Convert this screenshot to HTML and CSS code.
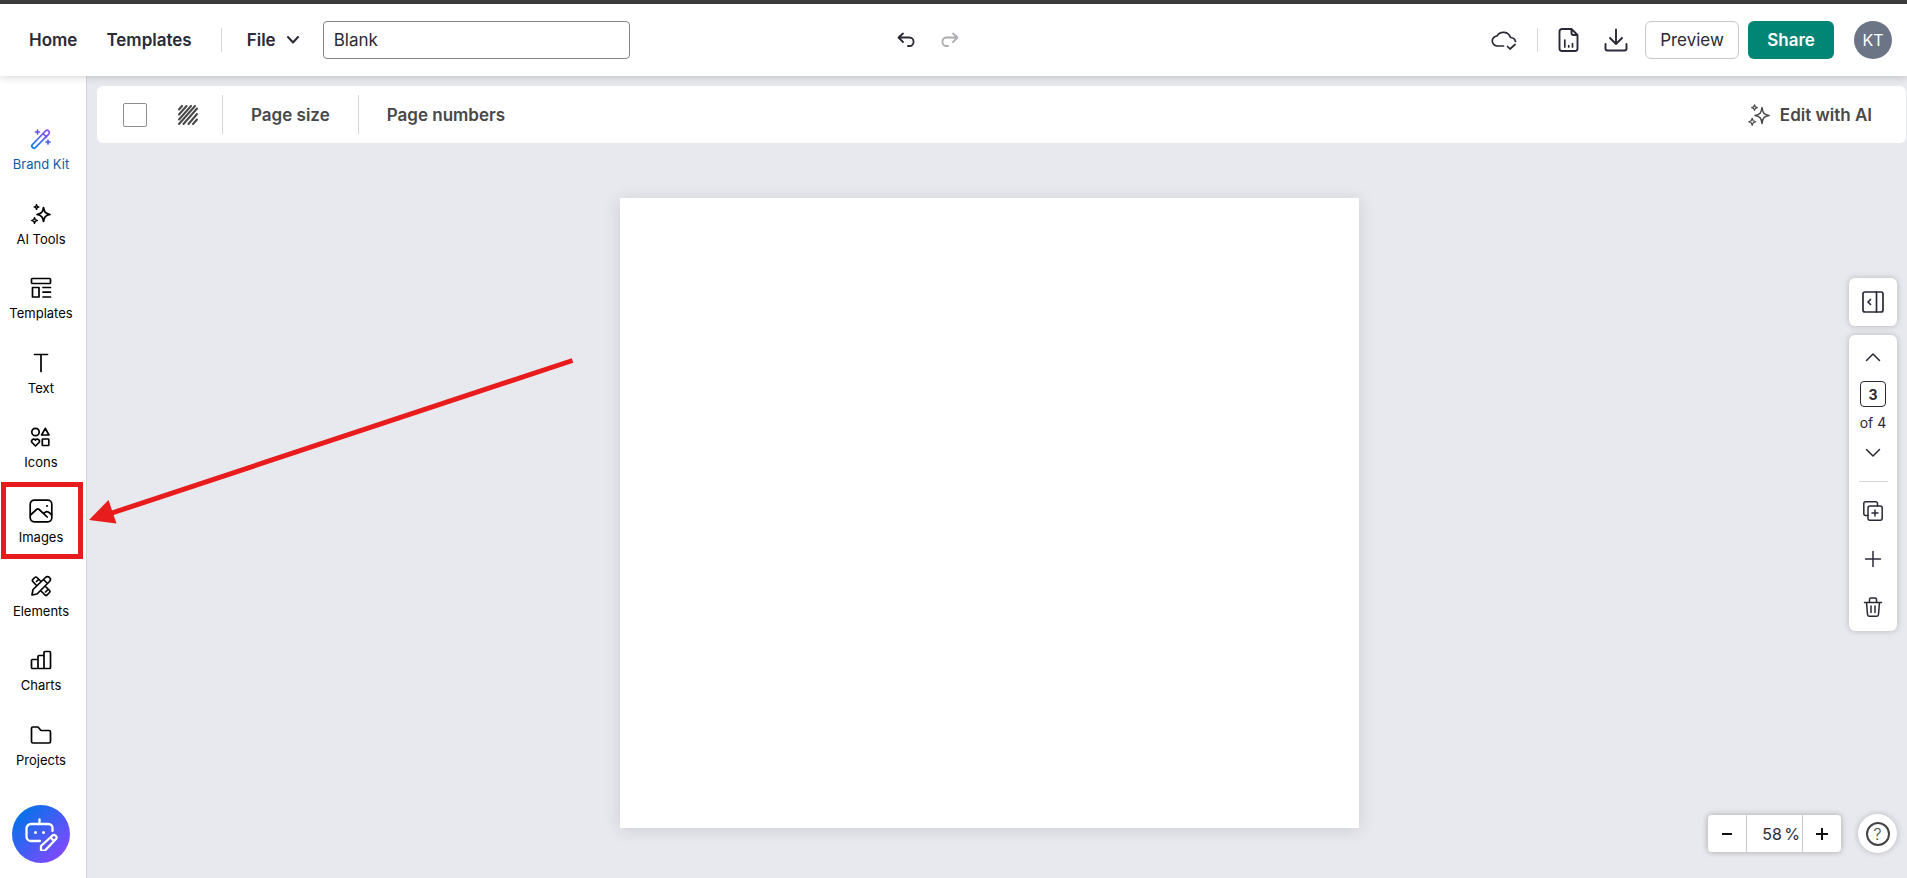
FILE: index.html
```html
<!DOCTYPE html>
<html lang="en">
<head>
    <meta charset="utf-8">
    <meta name="viewport" content="width=device-width, initial-scale=1">
    <title>Blank</title>
    <link rel="stylesheet" href="styles.css">
</head>
<body>

<header class="topbar">
    <nav class="topbar-left">
        <a href="#" class="nav-link">Home</a>
        <a href="#" class="nav-link">Templates</a>
        <span class="divider"></span>
        <button type="button" class="file-menu">File
            <svg width="14" height="14" viewBox="0 0 14 14"><path d="M2 4l5 5.500 5-5.500"/></svg>
        </button>
        <input type="text" class="doc-title" value="Blank" aria-label="Design title">
    </nav>
    <div class="history">
        <button type="button" class="icon-btn" aria-label="Undo">
            <svg width="20" height="20" viewBox="0 0 20 20"><path d="M7 3.500L2.500 7.500 7 12M3 7.500h10.500a4 4.200 0 0 1 0 8.500H12" stroke-width="1.800"/></svg>
        </button>
        <button type="button" class="icon-btn" aria-label="Redo" disabled>
            <svg width="20" height="20" viewBox="0 0 20 20"><path d="M13 3.500l4.500 4L13 12M17 7.500H6.500a4 4.200 0 0 0 0 8.500H8" stroke-width="1.800"/></svg>
        </button>
    </div>
    <div class="topbar-right">
        <button type="button" class="icon-btn" aria-label="Saved">
            <svg width="26" height="24" viewBox="0 0 26 24"><path d="M12.500 18H6.500a5 5 0 0 1-.500-10 7.500 7.500 0 0 1 13.500 1.500c2.500.2 4.500 1.500 5 4M16.500 18.500l2.500 2.500 5-4.500"/></svg>
        </button>
        <span class="divider"></span>
        <button type="button" class="icon-btn" aria-label="Report">
            <svg width="24" height="24" viewBox="0 0 24 24"><path d="M14.500 1H5A2.500 2.500 0 0 0 2.500 3.500v17A2.500 2.500 0 0 0 5 23h13a2.500 2.500 0 0 0 2.500-2.500V7zM14.500 1v4a2 2 0 0 0 2 2h4" stroke-width="1.900"/><path d="M7.800 12v7M11.700 17.500V19M15.500 15.500V19" stroke-width="1.700"/></svg>
        </button>
        <button type="button" class="icon-btn" aria-label="Download">
            <svg width="24" height="24" viewBox="0 0 24 24"><path d="M12 1.500v14M6 10l6 6 6-6M1.500 16v4.500a2 2 0 0 0 2 2h17a2 2 0 0 0 2-2V16" stroke-width="1.900"/></svg>
        </button>
        <button type="button" class="btn preview">Preview</button>
        <button type="button" class="btn share">Share</button>
        <button type="button" class="avatar">KT</button>
    </div>
</header>

<div class="app">
    <aside class="sidebar">
        <nav class="tools">
            <a href="#" class="tool brand">
                <svg width="22" height="22" viewBox="0 0 22 22">
                    <defs>
                        <linearGradient id="brandGradient" x1="0" y1="1" x2=".4" y2="0">
                            <stop offset="0" stop-color="#0074e8"/>
                            <stop offset="1" stop-color="#7d4fff"/>
                        </linearGradient>
                    </defs>
                    <path d="M2.500 16.500L15.500 3a1.900 1.900 0 0 1 3.200 3.200L5.500 19.500a2.100 2.100 0 0 1-3-3zM13 5.500l3.500 3.500M7.500 2v4M5.500 4h4M18 12v4M16 14h4" stroke="url(#brandGradient)"/>
                </svg>
                Brand Kit
            </a>
            <a href="#" class="tool">
                <svg width="22" height="22" viewBox="0 0 22 22"><path d="M13.500 4.500c.7 4.500 2 6 6.500 7-4.500 1-5.800 2.500-6.500 7-.7-4.500-2-6-6.500-7 4.500-1 5.800-2.500 6.500-7z"/><path d="M6.500 1.500l.7 1.800 1.800.7-1.800.7-.7 1.800-.7-1.800L4 4l1.800-.7zM4.500 14.500l.8 2.200 2.200.8-2.200.8-.8 2.200-.8-2.200-2.200-.8 2.200-.8z" stroke-width="1.300"/></svg>
                AI Tools
            </a>
            <a href="#" class="tool">
                <svg width="22" height="22" viewBox="0 0 22 22"><rect x="1.500" y="1.500" width="19" height="5" rx="1"/><path d="M2.500 10.500h6.500v9.500H2.500zM13 10.500h7.500M13 15.200h7.500M13 20h7.500"/></svg>
                Templates
            </a>
            <a href="#" class="tool">
                <svg width="22" height="22" viewBox="0 0 22 22"><path d="M4.500 2.500h13M11 2.500V19.500"/></svg>
                Text
            </a>
            <a href="#" class="tool">
                <svg width="22" height="22" viewBox="0 0 22 22"><circle cx="5.500" cy="6" r="3.700"/><path d="M15.300 2.300l3.700 6.700h-7.400z"/><rect x="12.300" y="13" width="6.500" height="6.500" rx=".6"/><path d="M5.500 20L2 16.500C.5 14.500 3.500 11.500 5.500 14c2-2.500 5 .5 3.500 2.500z"/></svg>
                Icons
            </a>
            <a href="#" class="tool active">
                <svg width="24" height="24" viewBox="0 0 24 24"><rect x="1.200" y="1.200" width="21.600" height="21.600" rx="4"/><path d="M1.500 16l6-5.500a2 2 0 0 1 2.700 0l8 7.500M14.500 14.500l1.500-1.200a3 3 0 0 1 3.800 0l2.700 2.200"/><circle cx="18" cy="7" r="1" class="dot"/></svg>
                Images
            </a>
            <a href="#" class="tool">
                <svg width="22" height="22" viewBox="0 0 22 22"><path d="M2 20l1-5.500L15.500 2.500a2.500 2.500 0 0 1 4 4L7 19zM13.500 4.500l4 4M6.500 10.500L2.800 6.500a1.500 1.500 0 0 1 0-2l2-2a1.500 1.500 0 0 1 2.200 0l4 4M6.500 6.500l2-2M15.500 11.500l4 4a1.500 1.500 0 0 1 0 2l-2.500 2.500a1.500 1.500 0 0 1-2 0l-3.500-3.500M15.500 17l2-2"/></svg>
                Elements
            </a>
            <a href="#" class="tool">
                <svg width="22" height="22" viewBox="0 0 22 22"><path d="M1.500 11.500a1 1 0 0 1 1-1H8v9H2.500a1 1 0 0 1-1-1zM8 19.500v-12a1 1 0 0 1 1-1h5v13zM14 19.500V3.500a1 1 0 0 1 1-1h4.500a1 1 0 0 1 1 1v15a1 1 0 0 1-1 1z"/></svg>
                Charts
            </a>
            <a href="#" class="tool">
                <svg width="22" height="22" viewBox="0 0 22 22"><path d="M1.500 4.500a1.500 1.500 0 0 1 1.500-1.500h5l3 3.500h8a1.500 1.500 0 0 1 1.500 1.500v9.500a1.500 1.500 0 0 1-1.500 1.500H3a1.500 1.500 0 0 1-1.500-1.500z"/></svg>
                Projects
            </a>
        </nav>
        <button type="button" class="assistant" aria-label="Assistant">
            <svg width="34" height="34" viewBox="0 0 34 34"><path d="M16 24H7a4.500 4.500 0 0 1-4.500-4.500v-8A4.500 4.500 0 0 1 7 7h17.500a4 4 0 0 1 4 4v3M15.500 7V2.500"/><path d="M17 34v-5L28.500 18.500a2.500 2.500 0 0 1 3.500 3.500L21 33.500zM26.500 20.500l3.500 3.500"/><circle cx="11.500" cy="15.500" r="1.500" class="dot"/><circle cx="19.500" cy="15.500" r="1.500" class="dot"/></svg>
        </button>
    </aside>

    <main class="workspace">
        <div class="toolbar">
            <button type="button" class="swatch" aria-label="Background color"></button>
            <button type="button" class="icon-btn pattern" aria-label="Background pattern">
                <svg width="20" height="20" viewBox="0 0 20 20"><path d="M1 4.500L4 1M1 9.500L8.500 1M1 14.500L13 1M1 19L17 1M5.500 19L19 3.500M10.500 19L19 9M15 19l4-4.500"/></svg>
            </button>
            <span class="divider"></span>
            <button type="button" class="text-btn">Page size</button>
            <span class="divider"></span>
            <button type="button" class="text-btn">Page numbers</button>
            <button type="button" class="text-btn edit-ai">
                <svg width="22" height="22" viewBox="0 0 22 22"><path d="M14 3.500c.7 5.500 2 7 7 8-5 1-6.300 2.500-7 8-.7-5.500-2-7-7-8 5-1 6.300-2.500 7-8z"/><path d="M6.500.8l.8 2 2 .8-2 .8-.8 2-.8-2-2-.8 2-.8zM4.200 14.300l1 2.500 2.500 1-2.500 1-1 2.500-1-2.500-2.500-1 2.500-1z" stroke-width="1.200"/></svg>
                Edit with AI
            </button>
        </div>

        <div class="stage">
            <div class="page"></div>
        </div>

        <div class="side-panel">
            <button type="button" class="card panel-toggle" aria-label="Open panel">
                <svg width="22" height="22" viewBox="0 0 22 22"><rect x="1" y="1" width="20" height="20" rx="2"/><path d="M14.500 1v20M8.500 8.500L6 11l2.500 2.500"/></svg>
            </button>
            <div class="card pager">
                <button type="button" class="icon-btn" aria-label="Previous page">
                    <svg width="16" height="16" viewBox="0 0 16 16"><path d="M1.500 11.500L8 5l6.500 6.500"/></svg>
                </button>
                <input type="text" class="page-number" value="3" aria-label="Page">
                <span class="page-total">of 4</span>
                <button type="button" class="icon-btn" aria-label="Next page">
                    <svg width="16" height="16" viewBox="0 0 16 16"><path d="M1.500 4.500L8 11l6.500-6.500"/></svg>
                </button>
                <hr class="rule">
                <button type="button" class="icon-btn page-action" aria-label="Duplicate page">
                    <svg width="20" height="20" viewBox="0 0 20 20"><path d="M5 14.500H2.500A1.700 1.700 0 0 1 .8 12.800V2.500A1.700 1.700 0 0 1 2.500.8h10.300a1.700 1.700 0 0 1 1.700 1.700V5"/><rect x="5" y="5" width="14.200" height="14.200" rx="2"/><path d="M12 9v6M9 12h6"/></svg>
                </button>
                <button type="button" class="icon-btn page-action" aria-label="Add page">
                    <svg width="20" height="20" viewBox="0 0 20 20"><path d="M10 2.500v15M2.500 10h15"/></svg>
                </button>
                <button type="button" class="icon-btn page-action" aria-label="Delete page">
                    <svg width="20" height="20" viewBox="0 0 20 20"><path d="M1.500 5.500h17M3.500 5.500l1 12a1.800 1.800 0 0 0 1.700 1.700h7.600a1.800 1.800 0 0 0 1.700-1.700l1-12M6.500 5.500V2.500A1.500 1.500 0 0 1 8 1h4a1.500 1.500 0 0 1 1.500 1.500v3M8 9v6.500M12 9v6.500"/></svg>
                </button>
            </div>
        </div>

        <div class="bottom-controls">
            <div class="zoom">
                <button type="button" class="zoom-btn" aria-label="Zoom out">
                    <svg width="14" height="14" viewBox="0 0 14 14"><path d="M2 7h10"/></svg>
                </button>
                <label class="zoom-value"><input type="text" value="58" aria-label="Zoom level">%</label>
                <button type="button" class="zoom-btn" aria-label="Zoom in">
                    <svg width="14" height="14" viewBox="0 0 14 14"><path d="M1 7h12M7 1v12"/></svg>
                </button>
            </div>
            <button type="button" class="help" aria-label="Help"><span class="help-mark">?</span></button>
        </div>
    </main>
</div>

<!-- pointer to the Images tool -->
<svg class="pointer" width="490" height="170" viewBox="0 0 490 170">
    <path d="M484.500 4.500L24 157" class="pointer-line"/>
    <path d="M1 164l19.500-20 8 23.500z" class="pointer-head"/>
</svg>

</body>
</html>
```
FILE: styles.css
```css
* {
    box-sizing: border-box;
}

body {
    margin: 0;
    height: 100vh;
    display: flex;
    flex-direction: column;
    overflow: hidden;
    font-family: Inter, "Liberation Sans", sans-serif;
    font-size: 17px;
    color: #2b2935;
    background: #e8e9ee;
}

button, input {
    font: inherit;
    color: inherit;
}

button {
    border: 0;
    padding: 0;
    background: none;
    cursor: pointer;
}

a {
    color: inherit;
    text-decoration: none;
}

svg {
    display: block;
    flex: none;
    fill: none;
    stroke: currentColor;
    stroke-width: 1.7;
    stroke-linecap: round;
    stroke-linejoin: round;
}

.dot {
    fill: currentColor;
    stroke: none;
}

.icon-btn {
    display: flex;
    align-items: center;
    justify-content: center;
}

.icon-btn:disabled {
    color: #acabb0;
}

.divider {
    width: 1px;
    height: 24px;
    background: #d9d9dc;
}

/* top bar */
.topbar {
    position: relative;
    z-index: 2;
    flex: none;
    display: grid;
    grid-template-columns: 1fr auto 1fr;
    align-items: center;
    height: 76px;
    padding: 0 15px 0 29px;
    border-top: 4px solid #3b3b3b;
    background: #fff;
    box-shadow: 0 1px 8px rgba(0, 0, 0, .18);
}

.topbar-left, .topbar-right, .history {
    display: flex;
    align-items: center;
}

.nav-link {
    margin-right: 29px;
    font-weight: 600;
}

.file-menu {
    display: flex;
    align-items: center;
    gap: 10px;
    margin: 0 23px 0 25px;
    font-weight: 600;
}

.file-menu svg {
    stroke-width: 2;
}

.doc-title {
    width: 307px;
    height: 38px;
    padding: 0 10px;
    border: 1px solid #85858a;
    border-radius: 4px;
    background: #fff;
}

.history {
    gap: 24px;
    margin-right: 66px;
}

.topbar-right {
    justify-content: flex-end;
}

.topbar-right .divider {
    margin: 0 19px 0 20px;
}

.topbar-right .icon-btn + .icon-btn {
    margin-left: 23px;
}

.btn {
    height: 38px;
    border-radius: 6px;
}

.preview {
    width: 94px;
    margin-left: 17px;
    border: 1px solid #c9c9cc;
}

.share {
    width: 86px;
    margin-left: 9px;
    color: #fff;
    font-weight: 600;
    background: #018575;
}

.avatar {
    width: 38px;
    height: 38px;
    margin-left: 20px;
    border-radius: 50%;
    font-size: 16px;
    color: #fff;
    background: #6b7585;
}

.app {
    flex: 1;
    display: flex;
    min-height: 0;
}

/* left tools */
.sidebar {
    flex: none;
    display: flex;
    flex-direction: column;
    width: 87px;
    padding: 35px 4px 15px 0;
    border-right: 1px solid #d5d6da;
    background: #fff;
}

.tools {
    flex: 1;
    display: flex;
    flex-direction: column;
}

.tool {
    position: relative;
    flex: 1;
    display: flex;
    flex-direction: column;
    align-items: center;
    justify-content: center;
    gap: 6px;
    padding-top: 4px;
    font-size: 13px;
    line-height: 16px;
    color: #000;
}

.brand {
    color: #0b5cad;
}

.active::after {
    content: "";
    position: absolute;
    inset: -1px -1px -1px 1px;
    border: 5px solid #e81c1c;
}

.assistant {
    display: flex;
    align-items: center;
    justify-content: center;
    width: 58px;
    height: 58px;
    margin: 24px 0 0 12px;
    border-radius: 50%;
    color: #fff;
    background: linear-gradient(135deg, #0074e8 10%, #8547ff 90%);
}

.assistant svg {
    stroke-width: 2.3;
}

/* canvas area */
.workspace {
    position: relative;
    flex: 1;
    display: flex;
    flex-direction: column;
    min-width: 0;
}

.toolbar {
    flex: none;
    display: flex;
    align-items: center;
    height: 57px;
    margin: 10px 1px 0 10px;
    padding: 0 34px 0 26px;
    border-radius: 6px;
    color: #484848;
    background: #fff;
}

.toolbar .divider {
    height: 39px;
}

.swatch {
    width: 24px;
    height: 24px;
    border: 1px solid #8e8e8e;
    border-radius: 2px;
    background: #fff;
}

.pattern {
    margin: 0 24px 0 31px;
}

.pattern svg {
    stroke-width: 2;
}

.text-btn {
    margin: 0 28px;
    font-weight: 600;
}

.edit-ai {
    display: flex;
    align-items: center;
    gap: 10px;
    margin: 0 0 0 auto;
}

.edit-ai svg {
    stroke-width: 1.5;
}

.stage {
    flex: 1;
    display: flex;
    justify-content: center;
    align-items: flex-start;
    padding: 55px 15px 0 0;
}

.page {
    width: 739px;
    aspect-ratio: 739 / 630;
    background: #fff;
    box-shadow: 0 2px 16px rgba(40, 45, 65, .14);
}

.side-panel {
    position: absolute;
    top: 202px;
    right: 10px;
    display: flex;
    flex-direction: column;
    gap: 9px;
    width: 48px;
}

.card {
    border-radius: 6px;
    background: #fff;
    box-shadow: 0 0 6px rgba(0, 0, 0, .22);
}

.panel-toggle {
    display: flex;
    align-items: center;
    justify-content: center;
    height: 48px;
}

.pager {
    display: flex;
    flex-direction: column;
    align-items: center;
    padding-top: 14px;
}

.pager svg {
    stroke-width: 1.5;
}

.page-number {
    width: 26px;
    height: 26px;
    margin: 16px 0 6px;
    padding: 0;
    border: 1px solid #2b2935;
    border-radius: 4px;
    font-size: 14px;
    font-weight: 700;
    text-align: center;
}

.page-total {
    margin-bottom: 12px;
    font-size: 14px;
    line-height: 20px;
}

.rule {
    width: 29px;
    height: 1px;
    margin: 20px 0 5px;
    border: 0;
    background: #d5d5d8;
}

.page-action {
    width: 48px;
    height: 48px;
}

.bottom-controls {
    position: absolute;
    right: 10px;
    bottom: 25px;
    display: flex;
    align-items: center;
    gap: 17px;
}

.zoom {
    display: flex;
    height: 37px;
    border-radius: 4px;
    background: #fff;
    box-shadow: 0 0 6px rgba(0, 0, 0, .3);
}

.zoom-btn {
    display: flex;
    align-items: center;
    justify-content: center;
    width: 38px;
    color: #111;
}

.zoom-btn svg {
    stroke-width: 2;
    stroke-linecap: butt;
}

.zoom-value {
    display: flex;
    align-items: center;
    justify-content: flex-end;
    width: 57px;
    padding-right: 2px;
    border: solid #c8c8ca;
    border-width: 0 1px;
    font-size: 16px;
}

.zoom-value input {
    width: 22px;
    padding: 0;
    border: 0;
    background: none;
}

.help {
    display: flex;
    align-items: center;
    justify-content: center;
    width: 39px;
    height: 39px;
    border-radius: 50%;
    color: #444;
    background: #fff;
    box-shadow: 0 0 6px rgba(0, 0, 0, .22);
}

.help-mark {
    width: 24px;
    height: 24px;
    border: 2px solid #444;
    border-radius: 50%;
    font-size: 16px;
    font-weight: 300;
    line-height: 20px;
}

.pointer {
    position: absolute;
    top: 356px;
    left: 88px;
    z-index: 3;
    pointer-events: none;
}

.pointer-line {
    stroke: #e81c1c;
    stroke-width: 5;
    stroke-linecap: butt;
}

.pointer-head {
    fill: #e81c1c;
    stroke: none;
}
```
